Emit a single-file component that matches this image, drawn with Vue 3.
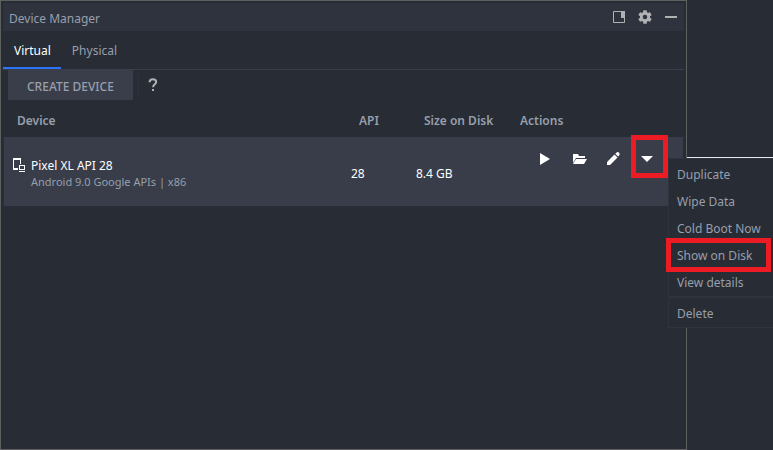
<script setup>
import { ref } from "vue";

const tabs = ["Virtual", "Physical"];
const activeTab = ref("Virtual");
const menuOpen = ref(true);

const devices = [
  {
    name: "Pixel XL API 28",
    info: "Android 9.0 Google APIs | x86",
    api: 28,
    size: "8.4 GB",
  },
];

const menuItems = [
  { label: "Duplicate" },
  { label: "Wipe Data" },
  { label: "Cold Boot Now" },
  { label: "Show on Disk", marked: true },
  { label: "View details" },
  { label: "Delete", separated: true },
];
</script>

<template>
  <div class="screen">
    <main class="panel">
      <header class="title-bar">
        <h1>Device Manager</h1>
        <div class="tools">
          <button aria-label="View mode">
            <svg width="12" height="12" viewBox="0 0 12 12">
              <path d="M.5.5h11v11H.5z" fill="none" stroke="#afb1b3" />
              <path d="M8 0h4v7H8z" fill="#afb1b3" />
            </svg>
          </button>
          <button aria-label="Settings">
            <svg width="14" height="14" viewBox="2 2 20 20">
              <path
                fill="#afb1b3"
                d="M19.14 12.94c.04-.3.06-.61.06-.94s-.02-.64-.07-.94l2.03-1.58a.5.5 0 0 0 .12-.61l-1.92-3.32a.49.49 0 0 0-.59-.22l-2.39.96a7 7 0 0 0-1.62-.94l-.36-2.54a.48.48 0 0 0-.48-.41h-3.84a.47.47 0 0 0-.47.41l-.36 2.54c-.59.24-1.13.57-1.62.94l-2.39-.96a.48.48 0 0 0-.59.22L2.74 8.87a.48.48 0 0 0 .12.61l2.03 1.58a6.5 6.5 0 0 0 0 1.88l-2.03 1.58a.5.5 0 0 0-.12.61l1.92 3.32c.12.22.37.29.59.22l2.39-.96c.5.38 1.03.7 1.62.94l.36 2.54c.05.24.24.41.48.41h3.84c.24 0 .44-.17.47-.41l.36-2.54a7 7 0 0 0 1.62-.94l2.39.96c.22.08.47 0 .59-.22l1.92-3.32a.48.48 0 0 0-.12-.61zM12 15.2a3.2 3.2 0 1 1 0-6.4 3.2 3.2 0 0 1 0 6.4z"
              />
            </svg>
          </button>
          <button aria-label="Hide">
            <svg width="12" height="12" viewBox="0 0 12 12">
              <path d="M0 5h12v2H0z" fill="#afb1b3" />
            </svg>
          </button>
        </div>
      </header>

      <nav class="tabs">
        <button
          v-for="tab in tabs"
          :key="tab"
          :class="{ active: tab === activeTab }"
          @click="activeTab = tab"
        >
          {{ tab }}
        </button>
      </nav>

      <div class="toolbar">
        <button class="create">CREATE DEVICE</button>
        <button class="help" aria-label="Help">
          <svg width="10" height="14" viewBox="0 0 10 14">
            <path
              d="M1.6 4.2C1.6 2.2 3 1.3 4.8 1.3S8.2 2.3 8.2 4c0 2.2-3.1 2.6-3.1 5.2"
              fill="none"
              stroke="#afb1b3"
              stroke-width="2"
            />
            <path d="M4 11h2v2H4z" fill="#afb1b3" />
          </svg>
        </button>
      </div>

      <table class="devices">
        <thead>
          <tr>
            <th>Device</th>
            <th class="col-api">API</th>
            <th class="col-size">Size on Disk</th>
            <th class="col-actions">Actions</th>
          </tr>
        </thead>
        <tbody>
          <tr v-for="device in devices" :key="device.name">
            <td class="device-cell">
              <div class="device">
                <svg width="13" height="14" viewBox="0 0 13 14">
                  <path d="M0 0h8v6H7V2H1v8h4v2H0z" fill="#fff" />
                  <path d="M6 7h6v5H6zM7 8v3h4V8z" fill="#fff" fill-rule="evenodd" />
                  <path d="M6 13h6v1H6z" fill="#fff" />
                </svg>
                <div>
                  <div class="name">{{ device.name }}</div>
                  <div class="info">{{ device.info }}</div>
                </div>
              </div>
            </td>
            <td>{{ device.api }}</td>
            <td>{{ device.size }}</td>
            <td class="actions-cell">
              <div class="actions">
                <button aria-label="Run">
                  <svg width="16" height="16" viewBox="0 0 16 16">
                    <path d="M3 2v12l10-6z" fill="#fff" />
                  </svg>
                </button>
                <button aria-label="Open folder">
                  <svg width="16" height="16" viewBox="0 0 16 16">
                    <path
                      d="M2 3h5l1 2h6v2H5l-3 5zM5 8h11l-3 5H2z"
                      fill="#fff"
                    />
                  </svg>
                </button>
                <button aria-label="Edit">
                  <svg width="16" height="16" viewBox="0 0 16 16">
                    <path
                      d="M2 11l7.500-7.500 3 3L5 14H2zM10.300 2.700l1-1q1.500-1.200 2.800 0t0 2.800l-1 1z"
                      fill="#fff"
                    />
                  </svg>
                </button>
                <div class="more">
                  <button aria-label="More actions" @click="menuOpen = !menuOpen">
                    <svg width="16" height="16" viewBox="0 0 16 16">
                      <path d="M2 5h12l-6 6z" fill="#fff" />
                    </svg>
                  </button>
                  <span class="mark"></span>
                  <ul v-if="menuOpen" class="menu">
                    <li
                      v-for="item in menuItems"
                      :key="item.label"
                      :class="{ separated: item.separated, marked: item.marked }"
                    >
                      <button>{{ item.label }}</button>
                    </li>
                  </ul>
                </div>
              </div>
            </td>
          </tr>
        </tbody>
      </table>
    </main>
    <aside class="editor"></aside>
  </div>
</template>

<style>
body {
  margin: 0;
  background: #282c34;
}
</style>

<style scoped>
* {
  box-sizing: border-box;
}

.screen {
  display: flex;
  min-height: 100vh;
  overflow: hidden;
  color: #979fad;
  font-family: "Noto Sans", "Open Sans", sans-serif;
  font-size: 12px;
  line-height: 16px;
}

button {
  display: block;
  padding: 0;
  border: none;
  background: none;
  color: inherit;
  font: inherit;
  cursor: pointer;
}

svg {
  display: block;
}

.panel {
  flex: 1;
  padding: 2px;
  border: 1px solid #5e6060;
}

.editor {
  width: 86px;
  height: 158px;
  border-bottom: 1px solid #e8e8f0;
}

.title-bar {
  display: flex;
  align-items: center;
  justify-content: space-between;
  height: 28px;
  padding: 0 7px 0 6px;
  background: #2f333d;
}

h1 {
  margin: 0;
  padding-top: 3px;
  font-size: 12px;
  font-weight: 400;
}

.tools {
  display: flex;
  align-items: center;
  gap: 13px;
}

.tabs {
  display: flex;
  height: 39px;
  border-bottom: 1px solid #3a3f4b;
}

.tabs button {
  padding: 4px 10px 0 11px;
  border-bottom: 2px solid transparent;
}

.tabs .active {
  border-color: #2d73f5;
  color: #fff;
}

.toolbar {
  display: flex;
  padding-left: 5px;
}

.create {
  height: 30px;
  padding: 3px 19px 0;
  background: #3a3e4a;
  font-weight: 500;
}

.help {
  margin: 5px;
  padding: 0 9px;
  border-left: 1px solid #2f333d;
}

.devices {
  width: calc(100% - 2px);
  margin: 0 1px;
  table-layout: fixed;
  border-collapse: collapse;
}

.col-api {
  width: 65px;
}

.col-size {
  width: 96px;
}

.col-actions {
  width: 179px;
}

th {
  height: 37px;
  padding: 4px 0 0 16px;
  font-weight: 600;
  text-align: left;
  white-space: nowrap;
}

th:first-child {
  padding-left: 13px;
}

td {
  height: 69px;
  padding: 4px 0 0 8px;
  background: #383d49;
  color: #fff;
}

.device {
  display: flex;
  gap: 5px;
}

.device-cell {
  padding-left: 9px;
}

.info {
  color: #979fad;
  font-size: 11px;
}

.actions-cell {
  padding: 14px 0 0 33px;
  vertical-align: top;
}

.actions {
  display: flex;
  gap: 18px;
}

.more {
  position: relative;
}

.mark {
  position: absolute;
  inset: -16px -13px -11px -8px;
  border: 5px solid #ed1c24;
  pointer-events: none;
}

.menu {
  position: absolute;
  top: 7px;
  left: 29px;
  width: 120px;
  margin: 0;
  padding: 2px 0 0;
  border: 1px solid #2f333d;
  background: #282c34;
  color: #979fad;
  list-style: none;
}

.menu li {
  position: relative;
}

.menu button {
  width: 100%;
  height: 27px;
  padding: 0 8px;
  text-align: left;
  white-space: nowrap;
}

.separated {
  padding-top: 2px;
  border-top: 2px solid #2f333d;
}

.marked::after {
  content: "";
  position: absolute;
  inset: -4px 16px -3px -3px;
  border: 5px solid #ed1c24;
  pointer-events: none;
}
</style>
